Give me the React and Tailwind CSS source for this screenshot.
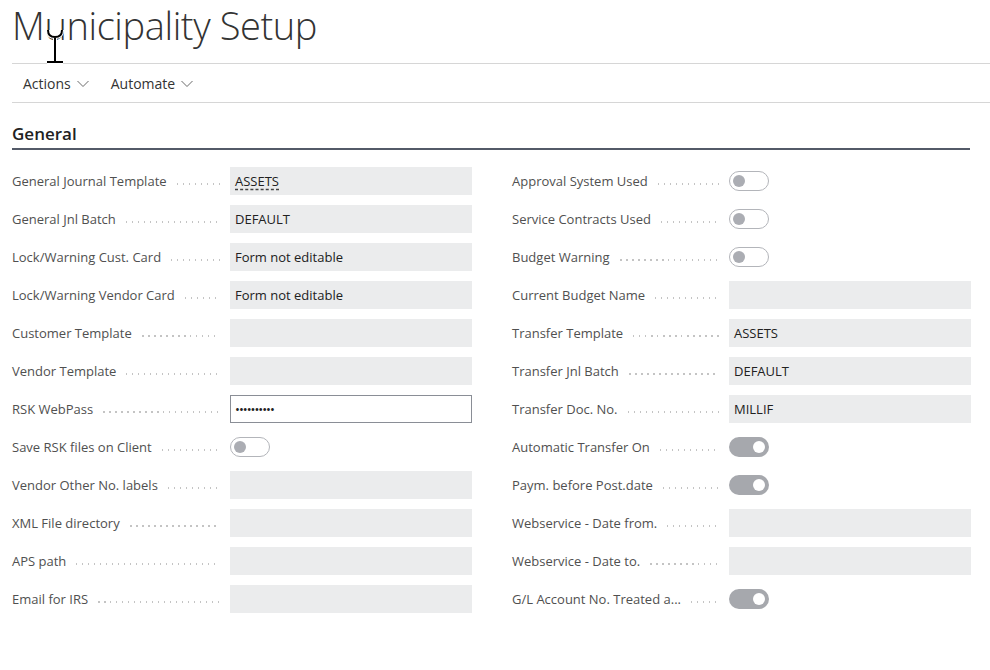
import React from "react";

const F = { fontFamily: '"Segoe UI", "Open Sans", "Noto Sans", sans-serif' };

function Leader() {
  return (
    <div className="flex-1 mx-[10px] h-[2px] self-center mt-[3px] bg-[repeating-linear-gradient(to_right,#c4c4c4_0px,#c4c4c4_1.5px,transparent_1.5px,transparent_6px)]" />
  );
}

function Toggle({ on }) {
  if (on) {
    return (
      <div className="w-[40px] h-[20px] rounded-full bg-[#a6a8ad] flex items-center justify-end pr-[4px]">
        <div className="w-[12px] h-[12px] rounded-full bg-white" />
      </div>
    );
  }
  return (
    <div className="w-[40px] h-[20px] rounded-full border border-[#b3b5ba] bg-white flex items-center pl-[3px]">
      <div className="w-[12px] h-[12px] rounded-full bg-[#abadb3]" />
    </div>
  );
}

function Row({ label, value, type, lw }) {
  let control;
  if (type === "toggle" || type === "toggleOn") {
    control = (
      <div className="w-[242px] h-[28px] flex items-center">
        <Toggle on={type === "toggleOn"} />
      </div>
    );
  } else if (type === "password") {
    control = (
      <div className="w-[242px] h-[28px] border border-[#8a8e96] bg-white flex items-center px-[4px] pt-[1px] text-[13px] text-[#212121] tracking-[-1px]">
        ••••••••••
      </div>
    );
  } else {
    control = (
      <div className="w-[242px] h-[28px] bg-[#ebeced] flex items-center px-[5px] pt-[2px] text-[13px] text-[#212121]">
        {type === "link" ? (
          <span className="underline decoration-dashed decoration-[#444] underline-offset-[3px]">{value}</span>
        ) : (
          value
        )}
      </div>
    );
  }
  return (
    <div className="flex items-center h-[28px]">
      <div className={`${lw ? "w-[217px]" : "w-[218px]"} flex items-center pt-[2px]`}>
        <span className="text-[13px] text-[#505050] whitespace-nowrap">{label}</span>
        <Leader />
      </div>
      {control}
    </div>
  );
}

const left = [
  ["General Journal Template", "ASSETS", "link"],
  ["General Jnl Batch", "DEFAULT"],
  ["Lock/Warning Cust. Card", "Form not editable"],
  ["Lock/Warning Vendor Card", "Form not editable"],
  ["Customer Template", ""],
  ["Vendor Template", ""],
  ["RSK WebPass", "", "password"],
  ["Save RSK files on Client", "", "toggle"],
  ["Vendor Other No. labels", ""],
  ["XML File directory", ""],
  ["APS path", ""],
  ["Email for IRS", ""],
];

const right = [
  ["Approval System Used", "", "toggle"],
  ["Service Contracts Used", "", "toggle"],
  ["Budget Warning", "", "toggle"],
  ["Current Budget Name", ""],
  ["Transfer Template", "ASSETS"],
  ["Transfer Jnl Batch", "DEFAULT"],
  ["Transfer Doc. No.", "MILLIF"],
  ["Automatic Transfer On", "", "toggleOn"],
  ["Paym. before Post.date", "", "toggleOn"],
  ["Webservice - Date from.", ""],
  ["Webservice - Date to.", ""],
  ["G/L Account No. Treated a...", "", "toggleOn"],
];

function Chevron() {
  return (
    <svg width="12" height="8" viewBox="0 0 12 8" className="ml-[6px] mt-[1px]">
      <path d="M0.5 1 L6 6.5 L11.5 1" fill="none" stroke="#6a6a6a" strokeWidth="1" />
    </svg>
  );
}

export default function App() {
  return (
    <div className="w-[990px] h-[670px] bg-white relative overflow-hidden" style={F}>
      <div className="pl-[12px]">
        <div className="h-[63px] overflow-visible">
          <h1 className="text-[38px] font-light text-[#333] leading-[50px] tracking-[-0.4px] whitespace-nowrap">
            Municipality Setup
          </h1>
        </div>
        <div className="border-t border-[#d6d6d6]" />
        <div className="h-[38px] flex items-center pl-[11px] text-[14px] text-[#333]">
          <span className="flex items-center">Actions<Chevron /></span>
          <span className="flex items-center ml-[22px]">Automate<Chevron /></span>
        </div>
        <div className="border-t border-[#d6d6d6]" />
        <div className="w-[958px] mt-[19px]">
          <div className="text-[17px] font-semibold text-[#222] leading-[24px] pb-[2px] border-b-2 border-[#535a68]">
            General
          </div>
        </div>
        <div className="flex mt-[17px] gap-[40px]">
          <div className="w-[460px] flex flex-col gap-[10px]">
            {left.map(([l, v, t]) => (
              <Row key={l} label={l} value={v} type={t} />
            ))}
          </div>
          <div className="w-[459px] flex flex-col gap-[10px]">
            {right.map(([l, v, t]) => (
              <Row key={l} label={l} value={v} type={t} lw />
            ))}
          </div>
        </div>
      </div>
      <svg className="absolute left-[45px] top-[29px]" width="20" height="36" viewBox="0 0 20 36">
        <g fill="none" strokeLinecap="butt">
          <path d="M3 1 Q3 8 10 8 Q17 8 17 1 M10 8 L10 33 M2 33 L18 33" stroke="#fff" strokeWidth="4" />
          <path d="M3 1 Q3 8 10 8 Q17 8 17 1 M10 8 L10 33 M2 33 L18 33" stroke="#000" strokeWidth="2" />
        </g>
      </svg>
    </div>
  );
}
